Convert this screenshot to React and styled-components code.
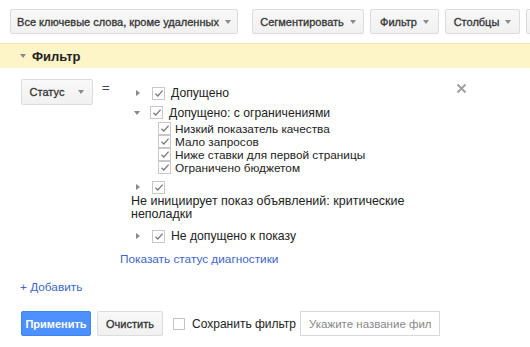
import styled, { createGlobalStyle } from "styled-components";

const GlobalStyle = createGlobalStyle`
  html, body {
    margin: 0;
    padding: 0;
    background: #fff;
    font-family: "Liberation Sans", Arial, sans-serif;
    color: #222;
    overflow: hidden;
  }
`;

const Page = styled.div`
  width: 530px;
  height: 347px;
  position: relative;
  overflow: hidden;
`;

const Toolbar = styled.div`
  display: flex;
  align-items: center;
  gap: 6px;
  padding: 9px 0 0 10px;
  height: 25px;
  white-space: nowrap;
`;

const ToolButton = styled.div`
  display: flex;
  align-items: center;
  justify-content: center;
  gap: 6px;
  width: ${(p) => p.$w}px;
  height: 23px;
  border: 1px solid #dcdcdc;
  border-radius: 2px;
  background: linear-gradient(#f8f8f8, #f1f1f1);
  font-size: 11px;
  color: #333;
  -webkit-text-stroke: 0.3px #333;
  flex-shrink: 0;
`;

const Separator = styled.div`
  width: 1px;
  height: 25px;
  background: #e5e5e5;
  margin: 0 1px;
`;

const Caret = styled.span`
  width: 0;
  height: 0;
  border-left: 3.5px solid transparent;
  border-right: 3.5px solid transparent;
  border-top: 4px solid #8a8a8a;
  display: inline-block;
  -webkit-text-stroke: 0;
`;

const Header = styled.div`
  margin-top: 9px;
  height: 24px;
  background: #fdf4c8;
  border-top: 1px solid #f1e6b5;
  display: flex;
  align-items: center;
  gap: 6px;
  padding-left: 20px;
  font-size: 13px;
  font-weight: bold;
  color: #222;
`;

const FilterRow = styled.div`
  display: flex;
  align-items: flex-start;
  padding: 11px 0 0 21px;
`;

const StatusButton = styled(ToolButton)`
  height: 24px;
  gap: 14px;
`;

const Equals = styled.div`
  font-size: 13px;
  color: #444;
  margin: 1px 0 0 9px;
  width: 18px;
`;

const Tree = styled.div`
  width: 300px;
  padding-top: 4px;
  display: flex;
  flex-direction: column;
`;

const Row = styled.div`
  display: flex;
  align-items: center;
  height: ${(p) => p.$h || 20}px;
  margin-top: ${(p) => p.$mt || 0}px;
  padding-left: 15px;
  font-size: 12.2px;
  color: #222;
  white-space: nowrap;
`;

const Arrow = styled.span`
  width: 0;
  height: 0;
  display: inline-block;
  margin-right: 12px;
  ${(p) =>
    p.$open
      ? `border-left: 3.5px solid transparent; border-right: 3.5px solid transparent; border-top: 4px solid #888; margin-left: -1px; margin-right: 10px;`
      : `border-top: 3.5px solid transparent; border-bottom: 3.5px solid transparent; border-left: 4px solid #888; margin-left: 1px;`}
`;

const Box = styled.span`
  width: 11px;
  height: 11px;
  border: 1px solid #c8c8c8;
  background: #fff;
  display: inline-flex;
  align-items: center;
  justify-content: center;
  margin-right: ${(p) => p.$mr ?? 6}px;
  flex-shrink: 0;
`;

const SubList = styled.div`
  display: flex;
  flex-direction: column;
  padding-left: 38px;
`;

const SubItem = styled.div`
  display: flex;
  align-items: center;
  height: 13px;
  font-size: 11.8px;
  color: #222;
  white-space: nowrap;
`;

const WrappedText = styled.div`
  padding-left: 11px;
  font-size: 12.5px;
  line-height: 13px;
  color: #222;
  margin-top: -2px;
`;

const Link = styled.div`
  color: #3e66c8;
  font-size: 11.8px;
  margin-top: ${(p) => p.$mt || 0}px;
  padding-left: ${(p) => p.$pl || 0}px;
  line-height: 14px;
`;

const Close = styled.div`
  margin: 1px 0 0 36px;
  width: 12px;
  height: 12px;
`;

const Actions = styled.div`
  display: flex;
  align-items: center;
  padding: 17px 0 0 21px;
  white-space: nowrap;
`;

const ApplyButton = styled.div`
  width: 68px;
  height: 23px;
  background: #4d90fe;
  border: 1px solid #3f84f3;
  border-radius: 2px;
  color: #fff;
  font-size: 11px;
  font-weight: bold;
  display: flex;
  align-items: center;
  justify-content: center;
`;

const ClearButton = styled(ToolButton)`
  margin-left: 6px;
`;

const SaveBox = styled.span`
  width: 10px;
  height: 10px;
  border: 1px solid #c4c4c4;
  margin: 0 7px 0 10px;
`;

const SaveLabel = styled.span`
  font-size: 12px;
  color: #222;
  margin-right: 4px;
`;

const NameInput = styled.input`
  width: 140px;
  height: 25px;
  box-sizing: border-box;
  border: 1px solid #d9d9d9;
  padding: 0 8px;
  font-family: "Liberation Sans", Arial, sans-serif;
  font-size: 11.5px;
  color: #222;
  outline: none;
  &::placeholder {
    color: #888;
  }
`;

function Check() {
  return (
    <svg width="10" height="9" viewBox="0 0 10 9">
      <path d="M1.5 4.8 L3.8 7 L8.6 1.6" fill="none" stroke="#7a7a7a" strokeWidth="1.3" />
    </svg>
  );
}

function CheckBox({ mr }) {
  return (
    <Box $mr={mr}>
      <Check />
    </Box>
  );
}

const subItems = [
  "Низкий показатель качества",
  "Мало запросов",
  "Ниже ставки для первой страницы",
  "Ограничено бюджетом",
];

export default function App() {
  return (
    <Page>
      <GlobalStyle />
      <Toolbar>
        <ToolButton $w={226}>
          Все ключевые слова, кроме удаленных <Caret />
        </ToolButton>
        <Separator />
        <ToolButton $w={110}>
          Сегментировать <Caret />
        </ToolButton>
        <ToolButton $w={67}>
          Фильтр <Caret />
        </ToolButton>
        <ToolButton $w={73}>
          Столбцы <Caret />
        </ToolButton>
        <ToolButton $w={40} />
      </Toolbar>

      <Header>
        <Caret />
        Фильтр
      </Header>

      <FilterRow>
        <StatusButton $w={70}>
          Статус <Caret />
        </StatusButton>
        <Equals>=</Equals>
        <Tree>
          <Row>
            <Arrow />
            <CheckBox />
            Допущено
          </Row>
          <Row $h={19}>
            <Arrow $open />
            <CheckBox />
            Допущено: с ограничениями
          </Row>
          <SubList>
            {subItems.map((s) => (
              <SubItem key={s}>
                <CheckBox mr={4} />
                {s}
              </SubItem>
            ))}
          </SubList>
          <Row $mt={3}>
            <Arrow />
            <CheckBox />
          </Row>
          <WrappedText>
            Не инициирует показ объявлений: критические неполадки
          </WrappedText>
          <Row $mt={5}>
            <Arrow />
            <CheckBox />
            Не допущено к показу
          </Row>
          <Link $mt={6}>Показать статус диагностики</Link>
        </Tree>
        <Close>
          <svg width="11" height="11" viewBox="0 0 11 11">
            <path d="M1.5 1.5 L9.5 9.5 M9.5 1.5 L1.5 9.5" stroke="#a0a0a0" strokeWidth="2" />
          </svg>
        </Close>
      </FilterRow>

      <Link $mt={14} $pl={20}>
        + Добавить
      </Link>

      <Actions>
        <ApplyButton>Применить</ApplyButton>
        <ClearButton $w={64}>Очистить</ClearButton>
        <SaveBox />
        <SaveLabel>Сохранить фильтр</SaveLabel>
        <NameInput placeholder="Укажите название фильтра" />
      </Actions>
    </Page>
  );
}
